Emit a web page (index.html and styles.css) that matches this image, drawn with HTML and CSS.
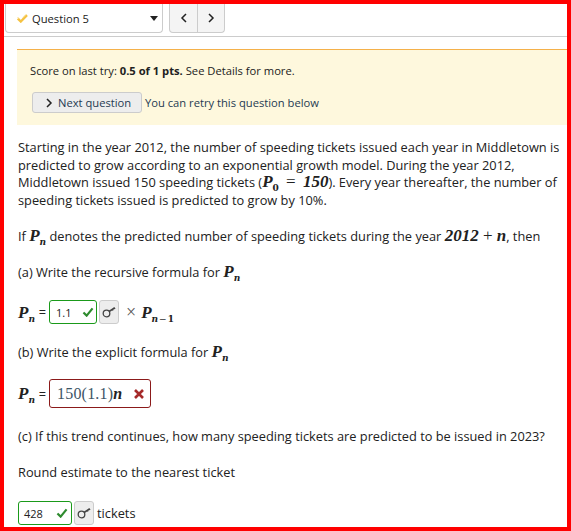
FILE: index.html
```html
<!DOCTYPE html>
<html lang="en">
<head>
<meta charset="utf-8">
<title>Question 5</title>
<link rel="stylesheet" href="styles.css">
</head>
<body>
<div class="page">
  <div class="topbar">
    <div class="select">
      <svg class="partial" width="11" height="9" viewBox="0 0 11 9"><path d="M.800 4.500l3 3L10 1.200" fill="none" stroke="#f5c242" stroke-width="2.400"/><path d="M.500 3l2 2M6 3.500L9 .500" fill="none" stroke="#f9dc8a" stroke-width="1"/></svg>
      <span class="select-label">Question 5</span>
      <span class="caret"></span>
    </div>
    <div class="pager">
      <div class="page-btn"><svg width="8" height="10" viewBox="0 0 8 10"><path d="M6 1L2 5l4 4" fill="none" stroke="#222" stroke-width="1.500"/></svg></div>
      <div class="page-btn"><svg width="8" height="10" viewBox="0 0 8 10"><path d="M2 1l4 4-4 4" fill="none" stroke="#222" stroke-width="1.500"/></svg></div>
    </div>
  </div>
  <div class="notice">
    <p class="score">Score on last try: <b>0.5 of 1 pts.</b> See Details for more.</p>
    <div class="notice-row">
      <div class="next-btn"><svg width="8" height="10" viewBox="0 0 8 10"><path d="M2 1l4 4-4 4" fill="none" stroke="#222" stroke-width="1.500"/></svg><span>Next question</span></div>
      <span class="retry">You can retry this question below</span>
    </div>
  </div>
  <div class="question">
    <p class="intro">Starting in the year 2012, the number of speeding tickets issued each year in Middletown is predicted to grow according to an exponential growth model. During the year 2012, Middletown issued 150 speeding tickets (<span class="m">P<sub><span class="up">0</span></sub> <span class="mo wide">=</span> 150</span>). Every year thereafter, the number of speeding tickets issued is predicted to grow by 10%.</p>
    <p class="para p-if">If <span class="m">P<sub>n</sub></span> denotes the predicted number of speeding tickets during the year <span class="m">2012 <span class="mo">+</span> n</span>, then</p>
    <p class="para p-a">(a) Write the recursive formula for <span class="m">P<sub>n</sub></span></p>
    <div class="answer a1">
      <span class="m lead">P<sub>n</sub></span> <span class="eq">=</span>
      <div class="field ok w-a"><span class="val">1.1</span><svg class="tick" width="12" height="10" viewBox="0 0 13 11"><path d="M1.500 6l3.500 3.500L11.500 1.500" fill="none" stroke="#2e8b2e" stroke-width="2.400"/></svg></div>
      <div class="key"><svg width="16" height="14" viewBox="0 0 16 14"><circle cx="5.500" cy="8.500" r="3.300" fill="none" stroke="#444" stroke-width="1.300"/><path d="M8 6.500L13.500 3" stroke="#444" stroke-width="1.500"/><path d="M11 4l1 1.500M13 2.500l1 1.500" stroke="#444" stroke-width="1.300"/></svg></div>
      <span class="times">×</span> <span class="m">P<sub>n<span class="up minus">−</span><span class="up">1</span></sub></span>
    </div>
    <p class="para p-b">(b) Write the explicit formula for <span class="m">P<sub>n</sub></span></p>
    <div class="answer a2">
      <span class="m lead">P<sub>n</sub></span> <span class="eq">=</span>
      <div class="field bad"><span class="expr">150(1.1)<span class="m">n</span></span><svg class="cross" width="10" height="10" viewBox="0 0 10 10"><path d="M1 1l8 8M9 1l-8 8" stroke="#a52a2a" stroke-width="2.600"/></svg></div>
    </div>
    <p class="para p-c">(c) If this trend continues, how many speeding tickets are predicted to be issued in 2023?</p>
    <p class="para p-r">Round estimate to the nearest ticket</p>
    <div class="answer a3">
      <div class="field ok w-c"><span class="val">428</span><svg class="tick" width="12" height="10" viewBox="0 0 13 11"><path d="M1.500 6l3.500 3.500L11.500 1.500" fill="none" stroke="#2e8b2e" stroke-width="2.400"/></svg></div>
      <div class="key"><svg width="16" height="14" viewBox="0 0 16 14"><circle cx="5.500" cy="8.500" r="3.300" fill="none" stroke="#444" stroke-width="1.300"/><path d="M8 6.500L13.500 3" stroke="#444" stroke-width="1.500"/><path d="M11 4l1 1.500M13 2.500l1 1.500" stroke="#444" stroke-width="1.300"/></svg></div>
      <span class="unit">tickets</span>
    </div>
  </div>
</div>
</body>
</html>
```
FILE: styles.css
```css
* { box-sizing: border-box; }
html, body { margin: 0; padding: 0; background: #fff; }
body { font-family: "Open Sans", sans-serif; font-size: 12.800px; color: #212121; }
p { margin: 0; }
.page { width: 571px; height: 531px; border: 4px solid #f00; overflow: hidden; }
.topbar { display: flex; height: 33px; padding-left: 1px; border-bottom: 1px solid #ccc; }
.select { width: 158px; height: 29px; border: 1px solid #ccc; border-top: 0; border-radius: 0 0 4px 4px; display: flex; align-items: center; padding-left: 11px; font-size: 11.200px; }
.partial { margin-right: 4px; }
.select-label { flex: 1; }
.caret { width: 0; height: 0; border-left: 4px solid transparent; border-right: 4px solid transparent; border-top: 5px solid #222; margin-right: 4px; }
.pager { display: flex; margin-left: 6px; height: 29px; border: 1px solid #ccc; border-top: 0; border-radius: 0 0 4px 4px; background: #f4f4f4; }
.page-btn { width: 27px; display: flex; align-items: center; justify-content: center; }
.page-btn + .page-btn { border-left: 1px solid #ccc; }
.notice { margin: 12px 0 0 13px; height: 76px; background: #fef8dd; border-top: 1px solid #f5b14a; padding: 13px 0 0 13px; font-size: 11.200px; }
.score { line-height: 16px; }
.notice-row { display: flex; align-items: center; margin-top: 13px; margin-left: 2px; }
.next-btn { width: 110px; height: 21px; background: #ededed; border: 1px solid #ccc; border-radius: 3px; display: flex; align-items: center; padding-left: 12px; gap: 5px; color: #1f3a52; }
.retry { margin-left: 3px; color: #1f3a52; }
.question { padding: 14px 0 0 14px; }
.intro { line-height: 17.600px; width: 545px; }
.m { font-family: "Liberation Serif", serif; font-weight: bold; font-style: italic; font-size: 17px; line-height: 0; }
.m sub { font-size: 9px; line-height: 0; font-style: italic; font-family: "DejaVu Serif", serif; }
.m .up { font-style: normal; }
.m .minus { margin: 0 1px; font-weight: normal; }
.mo, .times, .expr { font-family: "Liberation Serif", serif; font-weight: normal; font-style: normal; }
.wide { margin: 0 3px; }
.para { line-height: 18px; white-space: nowrap; }
.p-if { margin-top: 18px; }
.p-a { margin-top: 18px; }
.answer { display: flex; align-items: center; }
.a1 { margin-top: 18px; height: 26px; gap: 2px; }
.p-b { margin-top: 18px; }
.a2 { margin-top: 18px; height: 29px; gap: 2px; }
.p-c { margin-top: 19px; }
.p-r { margin-top: 18px; }
.a3 { margin-top: 20px; height: 24px; gap: 2px; }
.a1 .m, .a2 .m { line-height: 1; white-space: nowrap; }
.lead { width: 18px; }
.eq { font-size: 12.800px; width: 9px; text-align: center; }
.field { height: 24px; border-radius: 3px; display: flex; align-items: center; justify-content: space-between; background: #fff; font-size: 11px; }
.ok { border: 1px solid #1a9a1a; }
.w-a { width: 48px; padding: 0 2px 0 6px; }
.w-c { width: 54px; padding: 0 3px 0 5px; }
.bad { width: 102px; height: 29px; border: 1px solid #8b1a1a; padding: 0 6px 0 7px; }
.expr { font-size: 16px; color: #3d5566; letter-spacing: 0.200px; }
.expr .m { color: #222; font-size: 16px; }
.key { width: 20px; height: 24px; background: #ededed; border: 1px solid #ccc; border-radius: 3px; display: flex; align-items: center; justify-content: center; }
.times { font-size: 18px; color: #555; margin-left: 5px; margin-right: 3px; }
.unit { margin-left: 1px; font-size: 12.800px; }
```
